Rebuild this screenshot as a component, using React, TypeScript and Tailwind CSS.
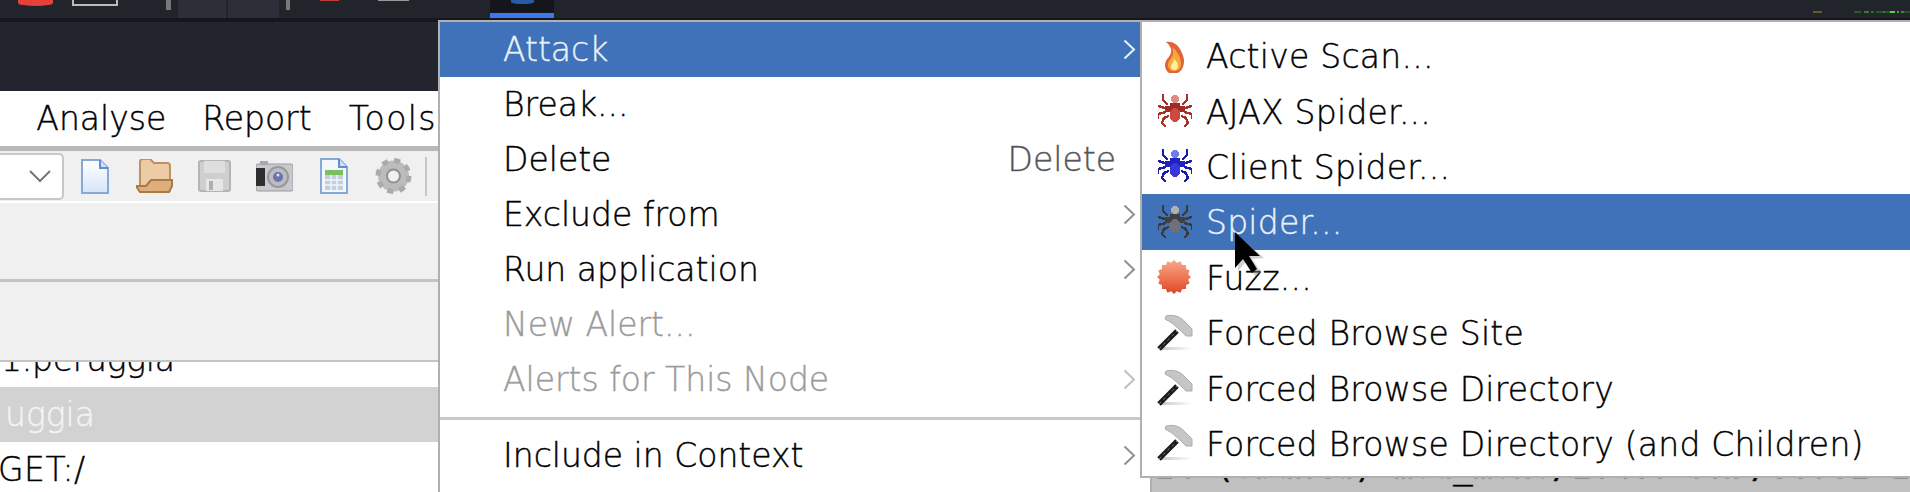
const fuzzPoints = Array.from({ length: 32 }, (_, i) => {
  const r = i % 2 === 0 ? 17 : 14.5;
  const a = (i / 32) * Math.PI * 2;
  return `${(18 + r * Math.sin(a)).toFixed(1)},${(17 + r * Math.cos(a)).toFixed(1)}`;
}).join(" ");

const Chevron = ({ color }: { color: string }) => (
  <svg width="13" height="21" viewBox="0 0 13 21" fill="none">
    <path d="M1.5 1.5 L11 10.5 L1.5 19.5" stroke={color} strokeWidth="2" />
  </svg>
);

const Spider = ({ leg, head, thorax, body }: { leg: string; head: string; thorax: string; body: string }) => (
  <svg width="34" height="34" viewBox="0 0 34 34" fill="none" shapeRendering="crispEdges">
    <g stroke={leg} strokeWidth="2.4">
      <path d="M5 0 V6 L10 11 M0 12 L7 14 M0 25 V20 L8 18 M8 33 L4 29 L6 24 L11 22" />
      <path d="M29 0 V6 L24 11 M34 12 L27 14 M34 25 V20 L26 18 M26 33 L30 29 L28 24 L23 22" />
    </g>
    <circle cx="17" cy="5" r="4" fill={head} />
    <rect x="7" y="12" width="20" height="6" fill={thorax} />
    <rect x="12" y="9" width="10" height="4" fill={thorax} />
    <ellipse cx="17" cy="21" rx="5.5" ry="7" fill={body} />
  </svg>
);

const Flame = () => (
  <svg width="34" height="34" viewBox="0 0 34 34">
    <path d="M8 3 C14 2 20 5 23 12 C26 18 27 22 25 28 C23 33 19 35 15 35 C10 35 7 31 7 26 C7 21 11 19 13 14 C14 10 12 6 8 3 Z" fill="#e2623a" />
    <path d="M14 8 C19 12 23 18 23 25 C23 30 20 32 16 32 C12 32 10 29 10 26 C10 22 14 19 15 15 C15 12 15 10 14 8 Z" fill="#f6a935" />
    <path d="M16 20 C19 22 20 25 20 27 C20 30 18 31 16 31 C14 31 12.5 29 13 27 C13.5 25 15.5 23 16 20 Z" fill="#ffef9c" />
  </svg>
);

const Fuzz = () => (
  <svg width="36" height="34" viewBox="0 0 36 34" className="-ml-[2px]">
    <defs>
      <linearGradient id="fuzzFill" x1="0" y1="0" x2="0" y2="1">
        <stop offset="0" stopColor="#f7a88c" />
        <stop offset="0.55" stopColor="#ee7350" />
        <stop offset="1" stopColor="#dc4526" />
      </linearGradient>
    </defs>
    <polygon points={fuzzPoints} fill="url(#fuzzFill)" />
  </svg>
);

const Hammer = () => (
  <svg width="36" height="36" viewBox="0 0 36 36" className="-ml-[2px] overflow-visible">
    <defs>
      <linearGradient id="hammerShadow" x1="0" y1="0" x2="1" y2="0">
        <stop offset="0" stopColor="#c8c8c8" />
        <stop offset="1" stopColor="#ffffff" />
      </linearGradient>
    </defs>
    <rect x="5" y="32" width="31" height="3" fill="url(#hammerShadow)" />
    <path d="M3 34 L21 16" stroke="#1c1c1c" strokeWidth="5" />
    <path d="M3 34 L21 16" stroke="#777" strokeWidth="1" strokeDasharray="3 3" />
    <path d="M10 1 C18 -1 25 2 29 7 L36 14 L36 21 L30 21 L24 15 L16 8 L9 4 Z" fill="#c6c6c6" stroke="#adadad" />
  </svg>
);

const FileIcon = () => (
  <svg width="28" height="35" viewBox="0 0 28 35">
    <defs>
      <linearGradient id="pageFill" x1="0" y1="0" x2="0" y2="1">
        <stop offset="0" stopColor="#ffffff" />
        <stop offset="1" stopColor="#d5e5f8" />
      </linearGradient>
    </defs>
    <path d="M1 1 H19 L27 9 V34 H1 Z" fill="url(#pageFill)" stroke="#86a9d8" strokeWidth="2" />
    <path d="M19 1 V9 H27" fill="#cfe0f5" stroke="#5f8fd0" strokeWidth="2" />
  </svg>
);

const FolderIcon = () => (
  <svg width="37" height="34" viewBox="0 0 37 34">
    <path d="M4 3 Q4 0 7 0 H14 L18 4 H31 Q34 4 34 7 V31 Q34 33 31 33 H7 Q4 33 4 30 Z" fill="#eccba5" stroke="#bd9263" strokeWidth="2" />
    <path d="M0 27 H10 L15 21 H36 V27 L33 33 H4 Z" fill="#dfae7c" stroke="#a87a48" strokeWidth="2" />
  </svg>
);

const FloppyIcon = () => (
  <svg width="33" height="32" viewBox="0 0 33 32">
    <rect x="1" y="1" width="31" height="30" rx="2" fill="#cfcfcf" stroke="#b4b4b4" strokeWidth="2" />
    <rect x="6" y="1" width="21" height="12" fill="#dedede" />
    <rect x="8" y="19" width="17" height="12" fill="#e6e6e6" />
    <rect x="11" y="21" width="4" height="9" fill="#b0b0b0" />
  </svg>
);

const CameraIcon = () => (
  <svg width="37" height="31" viewBox="0 0 37 31">
    <rect x="0" y="3" width="37" height="27" rx="2" fill="#c8c8ce" stroke="#9a9a9a" />
    <rect x="4" y="0" width="8" height="4" fill="#a8a8a8" />
    <rect x="0" y="7" width="9" height="18" fill="#2e2e2e" />
    <circle cx="22" cy="16" r="10" fill="#bcbcc2" stroke="#97979d" strokeWidth="2" />
    <circle cx="22" cy="16" r="5" fill="#6a74ac" />
    <circle cx="22" cy="14" r="1.5" fill="#dfe3f2" />
  </svg>
);

const SheetIcon = () => (
  <svg width="28" height="36" viewBox="0 0 28 36">
    <path d="M1 1 H19 L27 9 V35 H1 Z" fill="#f4f8fd" stroke="#86a9d8" strokeWidth="2" />
    <path d="M19 1 V9 H27" fill="#cfe0f5" stroke="#5f8fd0" strokeWidth="2" />
    <rect x="5" y="12" width="18" height="5" fill="#78c060" />
    <rect x="5" y="17" width="18" height="15" fill="#c2cfdf" />
    <path d="M5 22 H23 M5 27 H23 M11 17 V32 M17 17 V32" stroke="#f2f5f9" strokeWidth="1.5" />
  </svg>
);

const GearIcon = () => (
  <svg width="37" height="36" viewBox="0 0 37 36">
    <circle cx="18.5" cy="18" r="11" fill="none" stroke="#bcbcbc" strokeWidth="9" />
    <circle cx="18.5" cy="18" r="15.5" fill="none" stroke="#aaaaaa" strokeWidth="5" strokeDasharray="6 6.2" />
    <circle cx="18.5" cy="18" r="6.5" fill="none" stroke="#8f8f8f" strokeWidth="2" />
  </svg>
);

const MenuRow = ({
  label,
  shortcut,
  arrow,
  active,
  disabled,
}: {
  label: string;
  shortcut?: string;
  arrow?: boolean;
  active?: boolean;
  disabled?: boolean;
}) => (
  <div
    className={`flex h-[55px] items-center justify-between pl-[63px] ${shortcut ? "pr-[34px]" : "pr-[14px]"} ${
      active ? "bg-[#3f72b8] text-[#eaf1fb]" : disabled ? "text-[#9b9b9b]" : "text-black"
    }`}
  >
    <span>{label}</span>
    {shortcut && <span className="text-[#555555]">{shortcut}</span>}
    {arrow && <Chevron color={active ? "#eaf1fb" : disabled ? "#c0c0c0" : "#909090"} />}
  </div>
);

const SubRow = ({ icon, label, active }: { icon: React.ReactNode; label: string; active?: boolean }) => (
  <div className={`flex h-[55.4px] items-center gap-[14px] pl-[16px] ${active ? "bg-[#3f72b8] text-[#eaf1fb]" : "text-black"}`}>
    <div className="flex w-[34px] shrink-0 items-center">{icon}</div>
    <span className="mt-[2px] tracking-[0.24px]">{label}</span>
  </div>
);

export default function App() {
  return (
    <div className="relative h-[492px] w-[1910px] overflow-hidden bg-white text-[33px] font-extralight leading-[55px] [-webkit-text-stroke:0.4px_currentColor] [font-family:'DejaVu_Sans',sans-serif]">
      {/* Desktop panel strip */}
      <div className="flex h-[18px] items-start bg-[#22242b]">
        <div className="ml-[18px] h-[6px] w-[35px] rounded-b-[100%] bg-[#e5403a]" />
        <div className="ml-[19px] h-[6px] w-[46px] border-x-2 border-b-2 border-[#bbbbbb]" />
        <div className="ml-[48px] h-[10px] w-[5px] bg-[#777777]" />
        <div className="ml-[7px] h-[18px] w-[48px] bg-[#2c2f38]" />
        <div className="ml-[2px] h-[18px] w-[51px] bg-[#2c2f38]" />
        <div className="ml-[7px] h-[10px] w-[4px] bg-[#777777]" />
        <div className="ml-[30px] h-[1px] w-[19px] bg-[#c03a3a]" />
        <div className="ml-[39px] h-[1px] w-[31px] bg-[#999999]" />
        <div className="ml-[81px] flex h-[18px] w-[64px] justify-center border-b-[5px] border-[#3b78f0] bg-[#14161c]">
          <div className="h-[4px] w-[23px] rounded-b-[100%] bg-[#2a5aa8]" />
        </div>
        <div className="ml-[1259px] mt-[11px] h-[2px] w-[9px] bg-[#6b5a28]" />
        <div className="ml-[32px] mt-[11px] flex h-[2px] w-[56px]">
          <div className="w-[7px] bg-[#2a5a28]" />
          <div className="w-[3px]" />
          <div className="w-[5px] bg-[#3a7a30]" />
          <div className="w-[2px]" />
          <div className="w-[3px] bg-[#2f6a2b]" />
          <div className="w-[2px]" />
          <div className="w-[7px] bg-[#2a5a28]" />
          <div className="w-[2px] bg-[#3a7a30]" />
          <div className="w-[5px] bg-[#2a5a28]" />
          <div className="w-[5px] bg-[#5bd040]" />
          <div className="w-[2px]" />
          <div className="w-[2px] bg-[#4aa838]" />
          <div className="w-[2px]" />
          <div className="w-[3px] bg-[#3a8a30]" />
          <div className="w-[6px] bg-[#265026]" />
        </div>
      </div>
      <div className="h-[4px] bg-[#15171c]" />
      <div className="h-[69px] bg-[#22252e]" />

      <div className="flex h-[401px]">
        {/* ZAP window, left part */}
        <div className="flex w-[438px] shrink-0 flex-col">
          <div className="flex h-[55px] gap-[36px] whitespace-nowrap bg-white text-black">
            <span className="-ml-[78px]">View</span>
            <span>Analyse</span>
            <span>Report</span>
            <span className="ml-[1px] tracking-[1.4px]">Tools</span>
          </div>
          <div className="h-[5px] bg-[#b8b8b8]" />
          <div className="flex h-[50px] items-center bg-[#f0f0f0]">
            <div className="-ml-[4px] flex h-[47px] w-[68px] items-center justify-end rounded-[5px] border-2 border-[#c8c8c8] bg-white pr-[11px]">
              <svg width="22" height="13" viewBox="0 0 22 13" fill="none">
                <path d="M1 1 L11 11 L21 1" stroke="#777777" strokeWidth="2" />
              </svg>
            </div>
            <div className="ml-[17px] flex"><FileIcon /></div>
            <div className="ml-[27px] flex"><FolderIcon /></div>
            <div className="ml-[25px] flex"><FloppyIcon /></div>
            <div className="ml-[25px] flex"><CameraIcon /></div>
            <div className="ml-[27px] flex"><SheetIcon /></div>
            <div className="ml-[27px] flex"><GearIcon /></div>
            <div className="ml-[13px] h-[39px] w-[2px] bg-[#c8c8c8]" />
          </div>
          <div className="h-[2px] bg-white" />
          <div className="h-[76px] bg-[#f0f0f0]" />
          <div className="h-[3px] bg-[#c4c4c4]" />
          <div className="h-[78px] bg-[#f0f0f0]" />
          <div className="h-[2px] bg-[#c4c4c4]" />
          <div className="flex-1 overflow-hidden whitespace-nowrap bg-white text-black">
            <div className="-mt-[30px] h-[55px] pl-[1px] tracking-[-0.25px]">1.peruggia</div>
            <div className="h-[55px] bg-[#d2d2d2] pl-[5px] text-[#f4f4f4]">uggia</div>
            <div className="-ml-[2px] h-[55px] tracking-[0.5px]">GET:/</div>
          </div>
        </div>

        {/* Area behind the menus */}
        <div className="flex min-w-0 flex-1 flex-col justify-end bg-white">
          <div className="h-[14px] overflow-hidden whitespace-nowrap bg-[#c0c0c0] pl-[717px] font-normal text-black [font-family:'DejaVu_Sans_Mono',monospace]">
            <div className="-mt-[39px]">24 (Ubuntu) mod_mono/2.4.3 PHP/5.3.2-1</div>
          </div>
        </div>
      </div>

      {/* Context menu */}
      <div className="absolute left-[438px] top-[20px] h-[480px] w-[714px] border-2 border-[#b0b0b0] bg-white">
        <MenuRow label="Attack" arrow active />
        <MenuRow label="Break..." />
        <MenuRow label="Delete" shortcut="Delete" />
        <MenuRow label="Exclude from" arrow />
        <MenuRow label="Run application" arrow />
        <MenuRow label="New Alert..." disabled />
        <MenuRow label="Alerts for This Node" arrow disabled />
        <div className="mb-[8px] mt-[10px] h-[3px] bg-[#c8c8c8]" />
        <MenuRow label="Include in Context" arrow />
      </div>

      {/* Attack submenu */}
      <div className="absolute left-[1140px] right-0 top-[20px] h-[458px] border-y-2 border-l-2 border-[#b0b0b0] bg-white pt-[6px]">
        <SubRow icon={<Flame />} label="Active Scan..." />
        <SubRow icon={<Spider leg="#a8322a" head="#e08a80" thorax="#a02a25" body="#c84a40" />} label="AJAX Spider..." />
        <SubRow icon={<Spider leg="#1c1ca8" head="#6a80e8" thorax="#2020c0" body="#3838d8" />} label="Client Spider..." />
        <SubRow icon={<Spider leg="#3a3a3a" head="#b0b0b0" thorax="#404040" body="#707078" />} label="Spider..." active />
        <SubRow icon={<Fuzz />} label="Fuzz..." />
        <SubRow icon={<Hammer />} label="Forced Browse Site" />
        <SubRow icon={<Hammer />} label="Forced Browse Directory" />
        <SubRow icon={<Hammer />} label="Forced Browse Directory (and Children)" />
      </div>

      {/* Mouse pointer */}
      <svg className="absolute left-[1233px] top-[230px]" width="34" height="48" viewBox="0 0 34 48">
        <path d="M5 5 V41 L13 32 L22 46 L28 42 L19 29 L31 28 Z" fill="#999999" opacity="0.45" />
        <path d="M2 2 V38 L10 29 L19 43 L24 39 L16 26 L27 26 Z" fill="#000000" />
      </svg>
    </div>
  );
}
